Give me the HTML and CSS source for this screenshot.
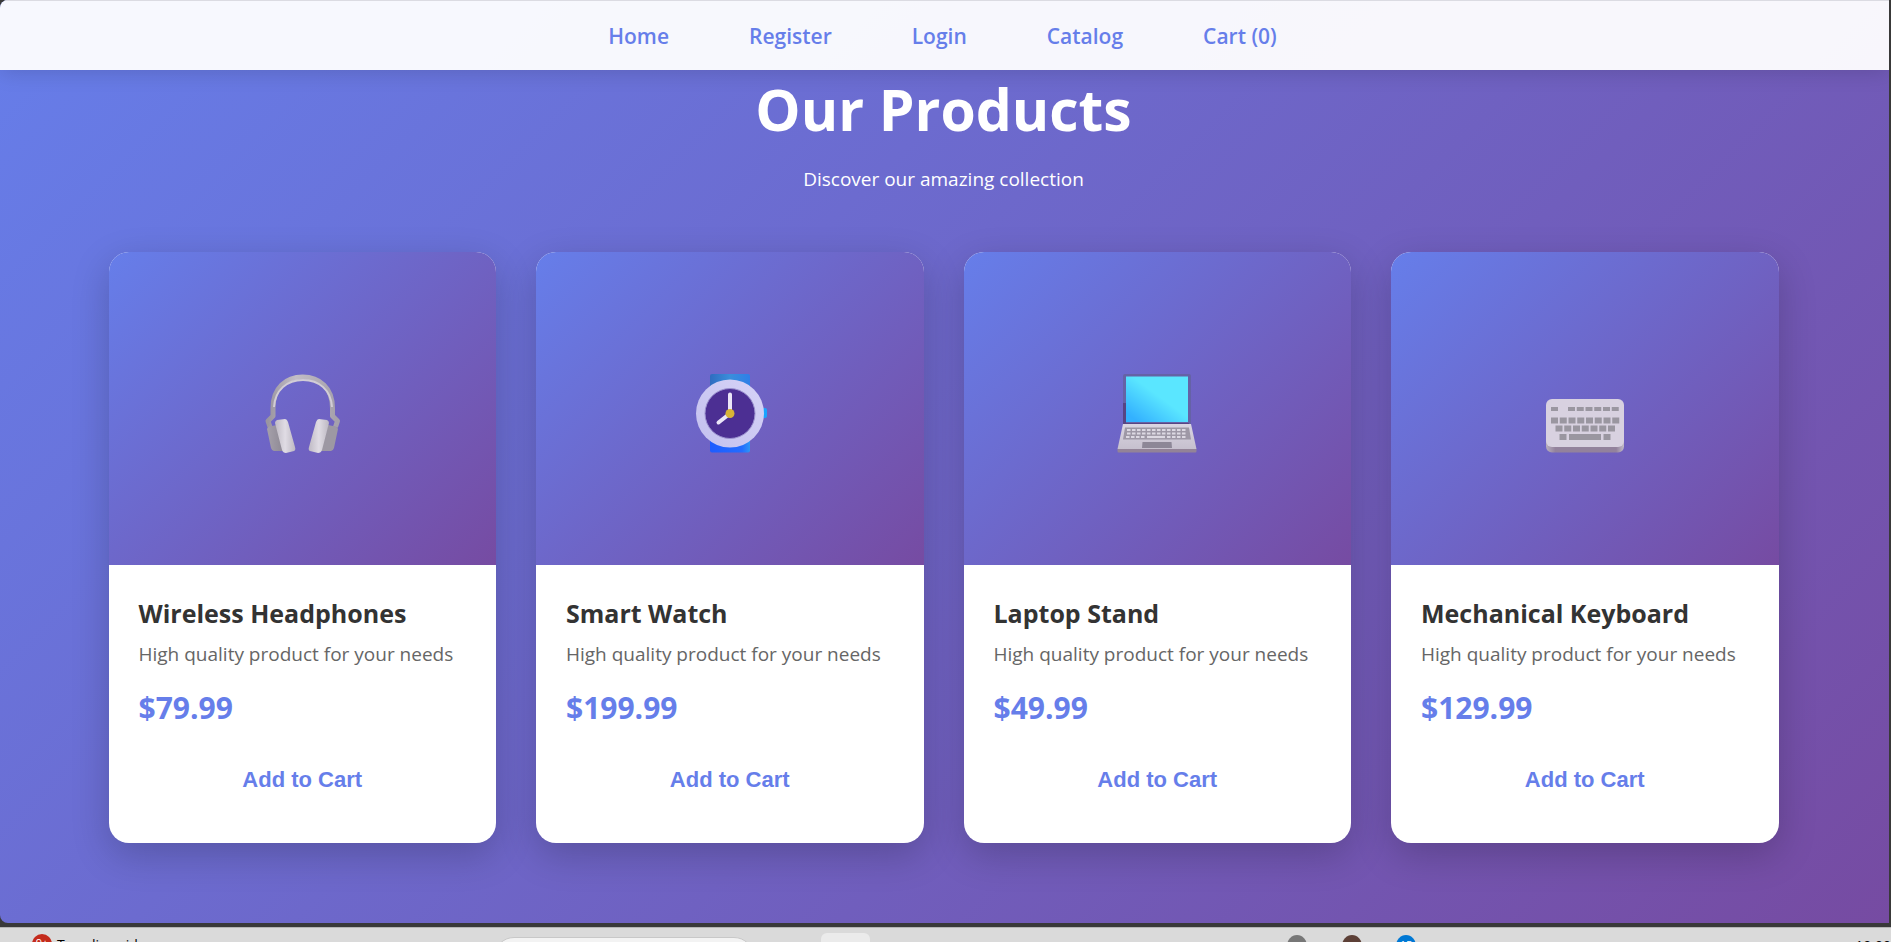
FILE: index.html
```
<!DOCTYPE html>
<html lang="en">
<head>
<meta charset="utf-8">
<title>Our Products</title>
<link rel="stylesheet" href="styles.css">
</head>
<body>
<div class="window">
  <nav class="nav">
    <a href="#">Home</a>
    <a href="#">Register</a>
    <a href="#">Login</a>
    <a href="#">Catalog</a>
    <a href="#">Cart (0)</a>
  </nav>
  <main class="page">
    <div class="content">
    <header class="hero">
      <h1>Our Products</h1>
      <p>Discover our amazing collection</p>
    </header>
    <section class="grid">
      <article class="card">
        <div class="thumb">
          <svg class="icon" viewBox="0 0 80 80" aria-hidden="true">
            <defs>
              <linearGradient id="hpBand" gradientUnits="userSpaceOnUse" x1="6" y1="0" x2="75" y2="0"><stop offset="0" stop-color="#9a95a0"/><stop offset=".4" stop-color="#c2bdc6"/><stop offset="1" stop-color="#a5a0ab"/></linearGradient>
              <linearGradient id="hpPad" x1="0" x2="1"><stop offset="0" stop-color="#bfbac4"/><stop offset=".5" stop-color="#e0dce4"/><stop offset="1" stop-color="#bdb8c2"/></linearGradient>
              <linearGradient id="hpCup" x1="0" x2="1"><stop offset="0" stop-color="#a5a0aa"/><stop offset="1" stop-color="#8d8894"/></linearGradient>
            </defs>
            <path d="M8 54l-2-6 5-5V35C11 15 24 4 40.700 4S70.500 15 70.500 35v8l5 5-2 6" fill="none" stroke="url(#hpBand)" stroke-width="5" stroke-linejoin="round"/>
            <path d="M12 34C13 17 25 7 41 7s28 10 29 27" fill="none" stroke="#d2cdd6" stroke-width="2"/>
            <path d="M5 56q1-3 5-3l5-1 7 26H12q-2 0-3-3z" fill="url(#hpCup)"/>
            <path d="M76 56q-1-3-5-3l-5-1-7 26h10q2 0 3-3z" fill="#9d98a3"/>
            <path d="M13 50q0-2 2-3l8-1q2 0 3 3l7 25q1 3-1 4l-8 2q-3 0-4-3z" fill="url(#hpPad)"/>
            <path d="M67 50q0-2-2-3l-8-1q-2 0-3 3l-7 25q-1 3 1 4l8 2q3 0 4-3z" fill="url(#hpPad)"/>
          </svg>
        </div>
        <div class="info">
          <h2>Wireless Headphones</h2>
          <p class="desc">High quality product for your needs</p>
          <p class="price">$79.99</p>
          <button type="button">Add to Cart</button>
        </div>
      </article>
      <article class="card">
        <div class="thumb">
          <svg class="icon" viewBox="0 0 80 80" aria-hidden="true">
            <defs>
              <linearGradient id="strapTop" x1="0" x2="1"><stop offset="0" stop-color="#2f6cc0"/><stop offset=".5" stop-color="#3a8edb"/><stop offset="1" stop-color="#2e7fe8"/></linearGradient>
              <linearGradient id="strapLow" x1="0" x2="1"><stop offset="0" stop-color="#1e5cff"/><stop offset=".8" stop-color="#236cff"/><stop offset="1" stop-color="#2d96f5"/></linearGradient>
              <linearGradient id="rim" x1="0" y1="1" x2="1" y2="0"><stop offset="0" stop-color="#c3c0ee"/><stop offset="1" stop-color="#d6d3f7"/></linearGradient>
            </defs>
            <rect x="20" y="1" width="40" height="22" rx="2" fill="url(#strapTop)"/>
            <rect x="20" y="60" width="40" height="19.500" rx="2" fill="url(#strapLow)"/>
            <rect x="72" y="35" width="5" height="10" rx="2" fill="#18a4ff"/>
            <circle cx="40" cy="40.500" r="34" fill="url(#rim)"/>
            <circle cx="40" cy="40.500" r="25" fill="#4c2f93" stroke="#9b91cf"/>
            <path d="M40 21.500v19L28.500 49.500" fill="none" stroke="#ebe6f8" stroke-width="4" stroke-linecap="round" stroke-linejoin="round"/>
            <circle cx="40" cy="40.500" r="4.500" fill="#d8b437"/>
          </svg>
        </div>
        <div class="info">
          <h2>Smart Watch</h2>
          <p class="desc">High quality product for your needs</p>
          <p class="price">$199.99</p>
          <button type="button">Add to Cart</button>
        </div>
      </article>
      <article class="card">
        <div class="thumb">
          <svg class="icon" viewBox="0 0 80 80" aria-hidden="true">
            <defs>
              <linearGradient id="screen" x1="0" y1="1" x2="1" y2="0"><stop offset=".1" stop-color="#33b1ff"/><stop offset=".55" stop-color="#5ae6ff"/><stop offset="1" stop-color="#5ae6ff"/></linearGradient>
              <linearGradient id="deck" x1="0" y1="0" x2="0" y2="1"><stop offset="0" stop-color="#dad5e2"/><stop offset="1" stop-color="#c6c0ce"/></linearGradient>
            </defs>
            <rect x="6" y="1" width="68" height="52" rx="2" fill="#6562a6"/>
            <path d="M6 30h3v20h63v3H6z" fill="#574484"/>
            <rect x="9" y="3.500" width="62" height="45.500" fill="url(#screen)"/>
            <path d="M6 51h68l5.500 25H.500z" fill="url(#deck)"/>
            <path d="M.500 76h79v2q0 1.500-1 1.500h-77q-1 0-1-1.500z" fill="#938397"/>
            <path d="M8 54.500h64l2 12H6z" fill="#9e98a6"/>
            <g stroke="#dcd8e2" stroke-width="2.200" fill="none">
              <path d="M10 57h60" stroke-dasharray="3.500 1.500"/>
              <path d="M10 60.500h60" stroke-dasharray="3.500 1.500"/>
              <path d="M9 64h19" stroke-dasharray="3.500 1.500"/>
              <path d="M30 64h18"/>
              <path d="M50 64h20" stroke-dasharray="3.500 1.500"/>
            </g>
            <path d="M25.500 69h29l.500 6h-30z" fill="#8d8797"/>
          </svg>
        </div>
        <div class="info">
          <h2>Laptop Stand</h2>
          <p class="desc">High quality product for your needs</p>
          <p class="price">$49.99</p>
          <button type="button">Add to Cart</button>
        </div>
      </article>
      <article class="card">
        <div class="thumb">
          <svg class="icon" viewBox="0 0 80 80" aria-hidden="true">
            <defs>
              <linearGradient id="kbSide" x1="0" x2="1"><stop offset="0" stop-color="#b9b0be"/><stop offset=".12" stop-color="#93829c"/><stop offset=".9" stop-color="#93829c"/><stop offset="1" stop-color="#c2bcc8"/></linearGradient>
            </defs>
            <rect x="1" y="34" width="78" height="45.500" rx="6" fill="url(#kbSide)"/>
            <rect x="1" y="26" width="78" height="48" rx="6" fill="#d8d1e0"/>
            <g fill="none" stroke="#9a96a0">
              <path d="M6 36h7M23 36h52" stroke-width="4" stroke-dasharray="7 1.750"/>
              <path d="M6 47.500h69" stroke-width="6" stroke-dasharray="7 1.750"/>
              <path d="M10.500 55.500h60" stroke-width="6" stroke-dasharray="7 1.750"/>
              <path d="M14.500 64h7M24 64h32M58.500 64h7" stroke-width="6"/>
            </g>
          </svg>
        </div>
        <div class="info">
          <h2>Mechanical Keyboard</h2>
          <p class="desc">High quality product for your needs</p>
          <p class="price">$129.99</p>
          <button type="button">Add to Cart</button>
        </div>
      </article>
    </section>
    </div>
  </main>
</div>
<footer class="taskbar">
  <span class="badge">9+</span>
  <span class="widget">Trending videos</span>
  <span class="search"></span>
  <span class="tile"></span>
  <span class="dot dot-gray"></span>
  <span class="dot dot-brown"></span>
  <span class="dot dot-blue">15</span>
  <span class="clock">10:00</span>
</footer>
</body>
</html>
```
FILE: styles.css
```
* { box-sizing: border-box; margin: 0; padding: 0; }

body {
  min-height: 100vh;
  display: flex;
  flex-direction: column;
  overflow: hidden;
  background: #393939;
  font-family: "Segoe UI", "Open Sans", "Noto Sans", sans-serif;
}

.window {
  flex: none;
  margin-right: 2px;
  border-radius: 8px 0 0 8px;
  overflow: hidden;
  background: linear-gradient(135deg, #667eea 0%, #764ba2 100%);
}

.nav {
  position: relative;
  display: flex;
  justify-content: center;
  gap: 80px;
  padding: 21px 4px 19px 0;
  border-top: 1px solid #dbdbe2;
  background: rgba(255, 255, 255, 0.95);
  box-shadow: 0 2px 20px rgba(0, 0, 0, 0.15);
}

.nav a {
  color: #667eea;
  font-size: 21px;
  font-weight: 600;
  line-height: 29px;
  text-decoration: none;
}

.page {
  padding: 0 2px 80px 0;
}

.content {
  max-width: 1750px;
  margin: 0 auto;
  padding: 0 40px;
}

.hero {
  padding-bottom: 60px;
  color: #fff;
  text-align: center;
}

.hero h1 {
  margin-bottom: 18px;
  font-size: 57px;
  line-height: 78px;
}

.hero p {
  font-size: 19px;
  line-height: 26px;
}

.grid {
  display: grid;
  grid-template-columns: repeat(4, 1fr);
  gap: 40px;
}

.card {
  overflow: hidden;
  border-radius: 20px;
  background: #fff;
  box-shadow: 0 12px 38px rgba(0, 0, 0, 0.2);
}

.thumb {
  height: 313px;
  display: grid;
  place-items: center;
  background: linear-gradient(135deg, #667eea 0%, #764ba2 100%);
}

.icon {
  width: 80px;
  height: 80px;
  margin-top: 8px;
}

.info {
  padding: 30px;
}

.info h2 {
  margin-bottom: 5px;
  color: #333;
  font-size: 25px;
  line-height: 36px;
}

.desc {
  margin-bottom: 16px;
  color: #666;
  font-size: 19px;
  line-height: 36px;
}

.price {
  margin-bottom: 20px;
  color: #667eea;
  font-size: 30px;
  font-weight: 700;
  line-height: 40px;
}

.info button {
  width: 100%;
  padding: 18px 18px 19px;
  border: 0;
  background: none;
  color: #667eea;
  font: 700 22px/28px Arial, "Liberation Sans", sans-serif;
}

.taskbar {
  display: grid;
  grid-template-columns: 32px 20px 442px 327px 466px 55px 54px 1fr auto;
  height: 15px;
  margin-top: 4px;
  overflow: hidden;
  border-top: 1px solid #b5b5b5;
  background: #dadada;
  font-size: 14px;
  line-height: 20px;
}

.badge { grid-column: 2; margin-top: 6px; height: 20px; border-radius: 10px; background: #c42b1c; color: #fff; font-size: 11px; line-height: 17px; text-align: center; }
.widget { grid-column: 3; margin-top: 7px; padding-left: 5px; }
.search { grid-column: 4; width: 260px; height: 40px; margin-top: 9px; border: 1px solid #c8c8c8; border-radius: 20px; background: #f3f3f3; }
.tile { grid-column: 5; width: 49px; height: 40px; margin-top: 5px; border-radius: 6px; background: #ebebeb; }
.dot { width: 20px; height: 22px; margin-top: 7px; border-radius: 50%; }
.dot-gray { grid-column: 5; justify-self: end; width: 20px; background: #777; }
.tile, .dot-gray { grid-row: 1; }
.dot-gray { grid-column: 6; justify-self: start; }
.dot-brown { grid-column: 7; background: #5d4037; }
.dot-blue { grid-column: 8; background: #0078d4; color: #fff; font-size: 11px; text-align: center; }
.clock { grid-column: 9; margin-top: 8px; }
```
